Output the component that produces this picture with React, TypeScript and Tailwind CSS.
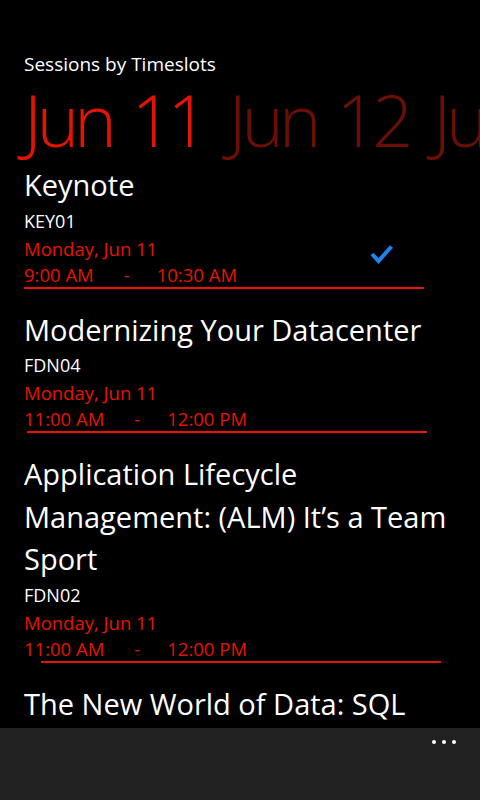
import React from "react";

type Session = {
  title: string;
  code: string;
  date: string;
  start: string;
  end: string;
  checked?: boolean;
  lineOffset: string;
};

const sessions: Session[] = [
  { title: "Keynote", code: "KEY01", date: "Monday, Jun 11", start: "9:00 AM", end: "10:30 AM", checked: true, lineOffset: "ml-0" },
  { title: "Modernizing Your Datacenter", code: "FDN04", date: "Monday, Jun 11", start: "11:00 AM", end: "12:00 PM", lineOffset: "ml-[3px]" },
  { title: "Application Lifecycle Management: (ALM) It\u2019s a Team Sport", code: "FDN02", date: "Monday, Jun 11", start: "11:00 AM", end: "12:00 PM", lineOffset: "ml-[17px]" },
  { title: "The New World of Data: SQL", code: "FDN05", date: "Monday, Jun 11", start: "1:00 PM", end: "2:00 PM", lineOffset: "ml-0" },
];

function Check() {
  return (
    <svg width="24" height="21" viewBox="0 0 24 21" className="absolute left-[370px] top-[80px]">
      <path d="M2 10 L8.5 17 L21.5 2.5" fill="none" stroke="#1a84ef" strokeWidth="4" />
    </svg>
  );
}

function SessionItem({ s }: { s: Session }) {
  return (
    <div className="relative mt-[20px] pl-[24px]">
      <div className="text-[29px] leading-[42.5px] text-white">{s.title}</div>
      <div className="text-[18px] leading-[28px] font-medium text-white">{s.code}</div>
      <div className="text-[18.5px] leading-[27px] text-[#e51400]">{s.date}</div>
      <div className="flex text-[18.5px] leading-[25px] text-[#e51400]">
        <span>{s.start}</span>
        <span className="ml-[30px]">-</span>
        <span className="ml-[27px]">{s.end}</span>
      </div>
      <div className={`${s.lineOffset} h-[2px] w-[400px] bg-[#e51400]`} />
      {s.checked ? <Check /> : null}
    </div>
  );
}

export default function App() {
  return (
    <div
      className="w-[480px] h-[800px] bg-black flex flex-col overflow-hidden"
      style={{ fontFamily: '"Open Sans", "Noto Sans", sans-serif' }}
    >
      <div className="h-[728px] overflow-hidden">
        <div className="pt-[50px] pl-[24px] text-[19px] leading-[28px] text-white">Sessions by Timeslots</div>
        <div className="mt-[5px] flex whitespace-nowrap pl-[24px] text-[72px] leading-[72px] font-light tracking-[-5px] [word-spacing:6px]">
          <span className="text-[#e51400]">Jun 11</span>
          <span className="ml-[25px] text-[#6b0f05]">Jun 12</span>
          <span className="ml-[25px] text-[#6b0f05]">Jun 13</span>
        </div>
        <div className="-mt-[11px]">
          {sessions.map((s) => (
            <SessionItem key={s.code} s={s} />
          ))}
        </div>
      </div>
      <div className="h-[72px] bg-[#212121] flex justify-end items-start pr-[24px] pt-[12px]">
        <div className="flex gap-[6px]">
          <span className="w-[4px] h-[4px] rounded-full bg-white" />
          <span className="w-[4px] h-[4px] rounded-full bg-white" />
          <span className="w-[4px] h-[4px] rounded-full bg-white" />
        </div>
      </div>
    </div>
  );
}
